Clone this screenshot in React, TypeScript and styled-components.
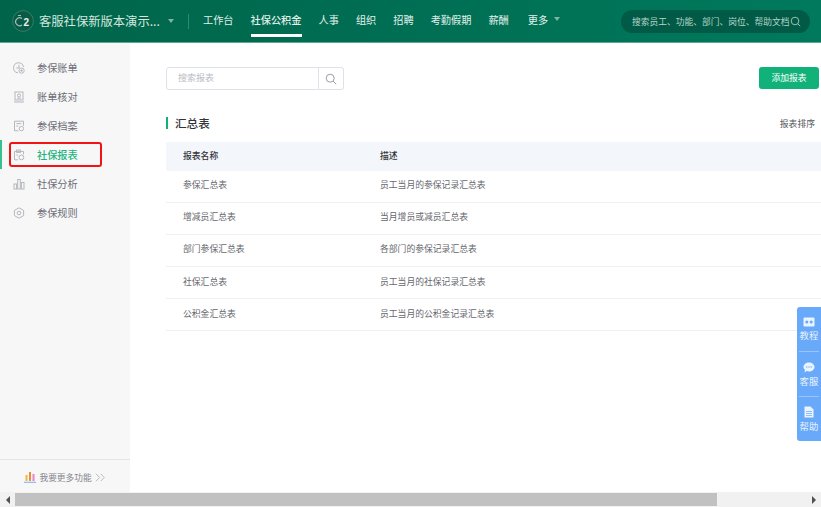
import React from 'react';
import styled, { createGlobalStyle } from 'styled-components';

const GlobalStyle = createGlobalStyle`
  html, body { margin: 0; padding: 0; overflow: hidden; background: #fff; }
  body { font-family: "Noto Sans CJK SC", "Noto Sans", sans-serif; }
`;

const Page = styled.div`
  position: relative;
  width: 821px;
  height: 507px;
  display: flex;
  flex-direction: column;
  overflow: hidden;
`;

const TopBar = styled.header`
  flex: 0 0 43px;
  display: flex;
  align-items: center;
  padding: 0 11px 0 12px;
  background: linear-gradient(90deg, #00644a, #00795c);
  border-bottom: 1px solid #5fa791;
  box-sizing: border-box;
`;

const LogoMark = styled.svg`
  width: 22px;
  height: 22px;
  flex: none;
`;

const CompanyName = styled.div`
  margin-left: 5px;
  width: 129px;
  font-size: 12.3px;
  line-height: 16px;
  color: #d4e6df;
  white-space: nowrap;
`;

const Caret = styled.span`
  width: 0;
  height: 0;
  border-left: 3.5px solid transparent;
  border-right: 3.5px solid transparent;
  border-top: 4px solid #7fb3a2;
  flex: none;
`;

const Separator = styled.span`
  width: 1px;
  height: 15px;
  margin: 0 14px 0 14px;
  background: #2b8a70;
  flex: none;
`;

const Nav = styled.nav`
  display: flex;
  align-items: stretch;
  align-self: stretch;
  gap: 17px;
`;

const NavItem = styled.a<{ $active?: boolean; $more?: boolean }>`
  display: flex;
  align-items: center;
  gap: 6px;
  margin-left: ${p => (p.$more ? 2 : 0)}px;
  font-size: 10.2px;
  color: #e3f0ec;
  font-weight: ${p => (p.$active ? 500 : 400)};
  white-space: nowrap;
  padding-top: 4px;
  box-sizing: border-box;
  border-bottom: 3px solid ${p => (p.$active ? '#fff' : 'transparent')};
  height: 37px;
`;

const GlobalSearch = styled.div`
  margin-left: auto;
  width: 189px;
  height: 23px;
  display: flex;
  align-items: center;
  padding-left: 11px;
  box-sizing: border-box;
  border-radius: 12px;
  background: #005a45;
  color: #b4d4c9;
  font-size: 8.75px;
  white-space: nowrap;
`;

const Body = styled.div`
  flex: 1;
  display: flex;
  min-height: 0;
`;

const Sidebar = styled.aside`
  flex: 0 0 130px;
  display: flex;
  flex-direction: column;
  background: #f7f7f8;
  padding-top: 10px;
  box-sizing: border-box;
`;

const MenuList = styled.div`
  flex: 1;
  display: flex;
  flex-direction: column;
`;

const MenuItem = styled.a<{ $active?: boolean }>`
  height: 29px;
  display: flex;
  align-items: center;
  gap: 12px;
  padding-left: 13px;
  box-sizing: border-box;
  font-size: 10.2px;
  color: ${p => (p.$active ? '#1cb37e' : '#6e6e76')};
  font-weight: ${p => (p.$active ? 500 : 400)};
  box-shadow: ${p => (p.$active ? 'inset 2px 0 0 #35c08d' : 'none')};
`;

const MenuIcon = styled.svg`
  width: 12px;
  height: 12px;
  flex: none;
  fill: none;
  stroke: #b5b7bd;
  stroke-width: 1;
`;

const SideFooter = styled.div`
  flex: 0 0 33px;
  display: flex;
  align-items: center;
  justify-content: center;
  gap: 3px;
  box-sizing: border-box;
  border-top: 1px solid #e3e4ea;
  font-size: 8.7px;
  color: #85858d;
  padding-top: 2px;
`;

const Content = styled.main`
  flex: 1;
  min-width: 0;
  padding: 24px 0 0 36px;
  box-sizing: border-box;
  background: #fff;
`;

const Toolbar = styled.div`
  display: flex;
  justify-content: space-between;
  align-items: flex-start;
  height: 23px;
`;

const SearchGroup = styled.div`
  display: flex;
  width: 178px;
  height: 23px;
`;

const SearchInput = styled.div`
  flex: 1;
  display: flex;
  align-items: center;
  padding: 0 0 2px 11px;
  border: 1px solid #dfe1e8;
  border-radius: 3px 0 0 3px;
  font-size: 9px;
  color: #b9bcc6;
`;

const SearchButton = styled.div`
  flex: 0 0 24px;
  display: flex;
  align-items: center;
  justify-content: center;
  border: 1px solid #dfe1e8;
  border-left: none;
  border-radius: 0 3px 3px 0;
`;

const AddButton = styled.button`
  width: 60px;
  height: 22px;
  margin-right: 2px;
  padding: 0 0 2px;
  border: none;
  border-radius: 3px;
  background: #10b27a;
  color: #fff;
  font-family: inherit;
  font-size: 8.8px;
`;

const SectionHead = styled.div`
  display: flex;
  align-items: center;
  justify-content: space-between;
  height: 20px;
  margin: 23px 6px 9px 0;
`;

const SectionTitle = styled.h2`
  margin: 0;
  padding-left: 7px;
  border-left: 2px solid #10b27a;
  font-size: 11.6px;
  line-height: 12px;
  font-weight: 500;
  color: #33343a;
`;

const SortLink = styled.a`
  font-size: 8.8px;
  color: #55565c;
`;

const Row = styled.div<{ $head?: boolean }>`
  display: grid;
  grid-template-columns: 197px 1fr;
  align-items: center;
  box-sizing: border-box;
  height: ${p => (p.$head ? 28.5 : 32.2)}px;
  padding: 0 0 ${p => (p.$head ? 2 : 3)}px 17px;
  font-size: 8.8px;
  color: ${p => (p.$head ? '#33343a' : '#66676d')};
  font-weight: ${p => (p.$head ? 500 : 400)};
  background: ${p => (p.$head ? '#f3f6fa' : '#fff')};
  border-bottom: ${p => (p.$head ? 'none' : '1px solid #eff0f2')};
`;

const HelpDock = styled.div`
  position: absolute;
  top: 307px;
  right: 0;
  width: 24px;
  height: 134px;
  display: flex;
  flex-direction: column;
  border-radius: 3px 0 0 3px;
  background: #69a9f9;
`;

const DockItem = styled.a`
  flex: 1;
  display: flex;
  flex-direction: column;
  align-items: center;
  justify-content: center;
  gap: 2px;
  margin: 0 2px;
  font-size: 9.4px;
  line-height: 12px;
  color: #eaf3ff;
  & + & { border-top: 1px solid #9cc6fb; }
`;

const HighlightBox = styled.div`
  position: absolute;
  left: 9px;
  top: 142px;
  width: 93px;
  height: 25px;
  box-sizing: border-box;
  border: 2px solid #f21414;
  border-radius: 3px;
`;

const ScrollBar = styled.div`
  flex: 0 0 15px;
  display: flex;
  align-items: center;
  background: #f1f1f1;
`;

const ScrollArrow = styled.span<{ $right?: boolean }>`
  flex: 0 0 15px;
  display: flex;
  justify-content: center;
  &::before {
    content: '';
    border-top: 4px solid transparent;
    border-bottom: 4px solid transparent;
    ${p => (p.$right ? 'border-left: 4px solid #505050;' : 'border-right: 4px solid #505050;')}
  }
`;

const ScrollTrack = styled.div`
  flex: 1;
  height: 13px;
`;

const ScrollThumb = styled.div`
  width: 702px;
  height: 100%;
  background: #c1c1c1;
`;

const iconPaths: Record<string, React.ReactNode> = {
  bill: (
    <>
      <path d="M10.5 5A5 5 0 1 0 5 10.8" />
      <path d="M6 2.8V6H3.4" />
      <circle cx="8.6" cy="8.6" r="2.6" />
      <path d="M8.6 7.4v2.4M7.4 8.6h2.4" />
    </>
  ),
  check: (
    <>
      <rect x="2" y="1" width="8" height="8" />
      <circle cx="6" cy="4.4" r="1.5" />
      <path d="M4 7.2h4M1 11h10" />
    </>
  ),
  archive: (
    <>
      <path d="M5.5 10.8H1.5V1.2h9v4.6" />
      <path d="M3.4 3.6h5M3.4 6h2" />
      <circle cx="8.4" cy="8.6" r="2.2" />
    </>
  ),
  report: (
    <>
      <path d="M5 10.8H1.5V2.4h9v3" />
      <rect x="3.6" y="1" width="3.8" height="2.4" />
      <circle cx="8.4" cy="8.4" r="2.4" />
      <path d="M3.4 6h1.8" />
    </>
  ),
  analysis: (
    <>
      <rect x="1" y="6" width="2.6" height="5" />
      <rect x="4.7" y="1.5" width="2.6" height="9.5" />
      <rect x="8.4" y="4.5" width="2.6" height="6.5" />
    </>
  ),
  rule: (
    <>
      <path d="M6 .8l4.6 2.6v5.2L6 11.2 1.4 8.6V3.4z" />
      <circle cx="6" cy="6" r="1.8" />
    </>
  ),
};

const menu = [
  { label: '参保账单', icon: 'bill' },
  { label: '账单核对', icon: 'check' },
  { label: '参保档案', icon: 'archive' },
  { label: '社保报表', icon: 'report', active: true },
  { label: '社保分析', icon: 'analysis' },
  { label: '参保规则', icon: 'rule' },
];

const navItems = ['工作台', '社保公积金', '人事', '组织', '招聘', '考勤假期', '薪酬'];

const reports = [
  ['参保汇总表', '员工当月的参保记录汇总表'],
  ['增减员汇总表', '当月增员或减员汇总表'],
  ['部门参保汇总表', '各部门的参保记录汇总表'],
  ['社保汇总表', '员工当月的社保记录汇总表'],
  ['公积金汇总表', '员工当月的公积金记录汇总表'],
];

export default function App() {
  return (
    <Page>
      <GlobalStyle />
      <TopBar>
        <LogoMark viewBox="0 0 22 22">
          <circle cx="11" cy="11" r="10.4" fill="#0b5a46" stroke="#3f8672" strokeWidth="0.8" />
          <path d="M10 8.500a4 4 0 1 0 0 6.500" fill="none" stroke="#9cc4b7" strokeWidth="1.2" />
          <path d="M6 5.500h3" stroke="#9cc4b7" strokeWidth="1" />
          <text x="11.500" y="15.500" fontSize="10" fontWeight="700" fill="#e8f2ee" fontFamily="Liberation Sans, sans-serif">2</text>
        </LogoMark>
        <CompanyName>客服社保新版本演示...</CompanyName>
        <Caret />
        <Separator />
        <Nav>
          {navItems.map((item, i) => (
            <NavItem key={item} $active={i === 1}>{item}</NavItem>
          ))}
          <NavItem $more>更多<Caret /></NavItem>
        </Nav>
        <GlobalSearch>
          搜索员工、功能、部门、岗位、帮助文档
          <svg width="11" height="11" viewBox="0 0 11 11" fill="none" stroke="#a8cdc1" strokeWidth="0.9">
            <circle cx="5" cy="5" r="3.800" />
            <path d="M7.800 7.800l2.400 2.400" />
          </svg>
        </GlobalSearch>
      </TopBar>
      <Body>
        <Sidebar>
          <MenuList>
            {menu.map(m => (
              <MenuItem key={m.label} $active={m.active}>
                <MenuIcon viewBox="0 0 12 12">{iconPaths[m.icon]}</MenuIcon>
                {m.label}
              </MenuItem>
            ))}
          </MenuList>
          <SideFooter>
            <svg width="12" height="12" viewBox="0 0 12 12">
              <rect x="1.500" y="4" width="2" height="6" fill="#f5b53c" />
              <rect x="5" y="1" width="2" height="9" fill="#f08a3c" />
              <rect x="8.500" y="3" width="2" height="7" fill="#e884c4" />
              <rect x="0" y="10.800" width="12" height="1" fill="#6fb4f5" />
            </svg>
            我要更多功能
            <svg width="11" height="9" viewBox="0 0 11 9" fill="none" stroke="#b0b1b8" strokeWidth="0.9">
              <path d="M1 .8l3.600 3.700L1 8.200M5.600 .8l3.600 3.700-3.600 3.700" />
            </svg>
          </SideFooter>
        </Sidebar>
        <Content>
          <Toolbar>
            <SearchGroup>
              <SearchInput>搜索报表</SearchInput>
              <SearchButton>
                <svg width="12" height="12" viewBox="0 0 12 12" fill="none" stroke="#9a9da8" strokeWidth="1">
                  <circle cx="5.200" cy="5.200" r="4" />
                  <path d="M8.200 8.200l3 3" />
                </svg>
              </SearchButton>
            </SearchGroup>
            <AddButton>添加报表</AddButton>
          </Toolbar>
          <SectionHead>
            <SectionTitle>汇总表</SectionTitle>
            <SortLink>报表排序</SortLink>
          </SectionHead>
          <Row $head>
            <span>报表名称</span>
            <span>描述</span>
          </Row>
          {reports.map(([name, desc]) => (
            <Row key={name}>
              <span>{name}</span>
              <span>{desc}</span>
            </Row>
          ))}
        </Content>
      </Body>
      <ScrollBar>
        <ScrollArrow />
        <ScrollTrack>
          <ScrollThumb />
        </ScrollTrack>
        <ScrollArrow $right />
      </ScrollBar>
      <HighlightBox />
      <HelpDock>
        <DockItem>
          <svg width="12" height="10" viewBox="0 0 12 10">
            <rect x="0.500" y="0.500" width="11" height="9" rx="1" fill="#eaf3ff" />
            <circle cx="3.800" cy="5" r="1.500" fill="#69a9f9" />
            <circle cx="8.200" cy="5" r="1.500" fill="#69a9f9" />
          </svg>
          教程
        </DockItem>
        <DockItem>
          <svg width="12" height="11" viewBox="0 0 12 11">
            <path d="M6 .5c3 0 5.500 2 5.500 4.500S9 9.500 6 9.500c-.8 0-1.500-.1-2.200-.4L1.500 10.500l.5-2.500C1 7.100.5 6.100.5 5 .5 2.500 3 .5 6 .5z" fill="#eaf3ff" />
            <circle cx="3.800" cy="5" r=".7" fill="#69a9f9" />
            <circle cx="6" cy="5" r=".7" fill="#69a9f9" />
            <circle cx="8.200" cy="5" r=".7" fill="#69a9f9" />
          </svg>
          客服
        </DockItem>
        <DockItem>
          <svg width="10" height="12" viewBox="0 0 10 12">
            <path d="M.5 .5h6l3 3v8h-9z" fill="#eaf3ff" />
            <path d="M2 5.500h6M2 7.500h6M2 9.500h6" stroke="#69a9f9" strokeWidth=".7" />
          </svg>
          帮助
        </DockItem>
      </HelpDock>
    </Page>
  );
}
